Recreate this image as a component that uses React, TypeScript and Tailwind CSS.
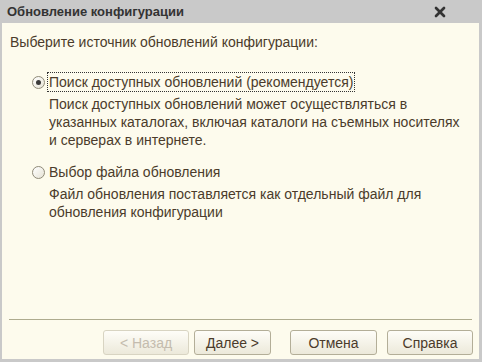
import { X } from 'lucide-react';

const textColor = 'text-[#4b3b2b]';

function Radio({ checked }: { checked: boolean }) {
  return (
    <span className="w-[13px] h-[13px] rounded-full border border-[#8f8a78] bg-gradient-to-br from-[#ffffff] to-[#e6e3d6] flex items-center justify-center shrink-0">
      {checked && <span className="w-[5px] h-[5px] rounded-full bg-[#3a3a3a]"></span>}
    </span>
  );
}

function Btn({ label, disabled, w }: { label: string; disabled?: boolean; w: string }) {
  return (
    <button
      className={`${w} h-[25px] rounded-[3px] border text-[14px] flex items-center justify-center bg-gradient-to-b from-[#fefdf8] to-[#ece9da] ${
        disabled ? 'border-[#d8d4c2] text-[#c4bcae]' : 'border-[#b3ae98] text-[#4b3b2b]'
      }`}
    >
      {label}
    </button>
  );
}

export default function App() {
  return (
    <div className="w-[482px] h-[362px] bg-[#c9c9c9] flex flex-col font-['Liberation_Sans',Arial,sans-serif]">
      <div className="h-[23px] flex items-center justify-between pl-[7px] pr-[34px]">
        <span className="text-[13px] font-bold text-[#333333]">Обновление конфигурации</span>
        <X size={16} strokeWidth={4} className="text-[#333333]" />
      </div>

      <div className={`flex-1 ml-[2px] mr-[3px] mb-[3px] bg-[#fdfbed] flex flex-col text-[14px] leading-[18px] ${textColor}`}>
        <div className="pl-[8px] pt-[10px]">Выберите источник обновлений конфигурации:</div>

        <div className="pl-[30px] mt-[21px] flex flex-col">
          <div className="flex items-center gap-[2px]">
            <Radio checked />
            <span className="border border-dotted border-[#333] px-[1px]">Поиск доступных обновлений (рекомендуется)</span>
          </div>
          <div className="pl-[17px] mt-[3px]">
            Поиск доступных обновлений может осуществляться в
            <br />
            указанных каталогах, включая каталоги на съемных носителях
            <br />
            и серверах в интернете.
          </div>

          <div className="flex items-center gap-[2px] mt-[14px]">
            <Radio checked={false} />
            <span className="px-[2px]">Выбор файла обновления</span>
          </div>
          <div className="pl-[17px] mt-[4px]">
            Файл обновления поставляется как отдельный файл для
            <br />
            обновления конфигурации
          </div>
        </div>

        <div className="flex-1"></div>
        <div className="mx-[7px] h-px bg-[#aeab8e]"></div>
        <div className="flex justify-end items-center pr-[6px] pt-[10px] pb-[4px]">
          <Btn label="< Назад" disabled w="w-[86px]" />
          <div className="w-[5px]"></div>
          <Btn label="Далее >" w="w-[77px]" />
          <div className="w-[19px]"></div>
          <Btn label="Отмена" w="w-[87px]" />
          <div className="w-[10px]"></div>
          <Btn label="Справка" w="w-[86px]" />
        </div>
      </div>
    </div>
  );
}
